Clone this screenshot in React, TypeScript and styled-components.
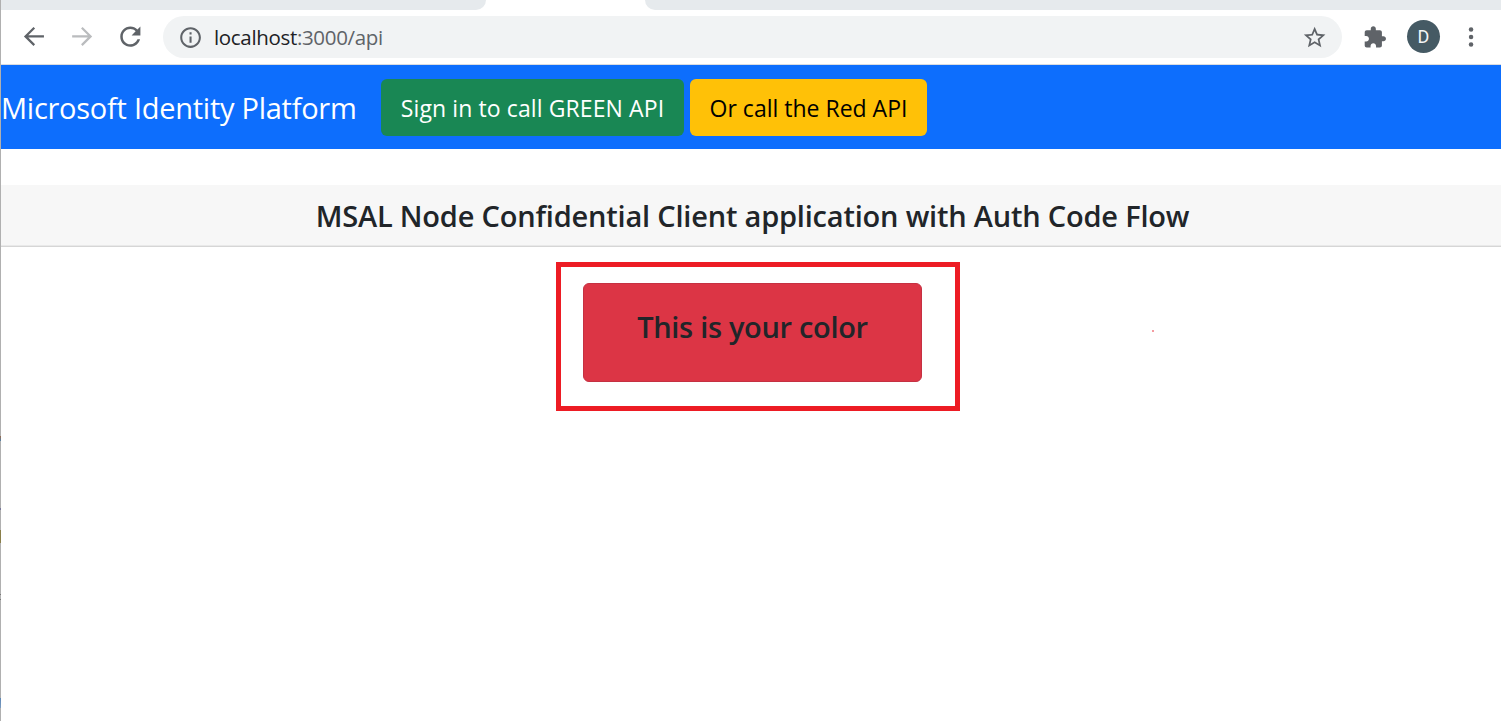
import React from "react";
import styled, { createGlobalStyle } from "styled-components";

const GlobalStyle = createGlobalStyle`
  * { box-sizing: border-box; }
  body {
    margin: 0;
    background: #fff;
    overflow: hidden;
    font-family: "Segoe UI", "Open Sans", "Noto Sans", sans-serif;
    color: #212529;
  }
`;

const Window = styled.div`
  position: relative;
  display: grid;
  grid-template-columns: 1px 1fr;
  width: 1501px;
  height: 721px;
  overflow: hidden;
`;

const WindowEdge = styled.div`
  background:
    linear-gradient(#8a7f4a, #8a7f4a) 0 530px / 1px 13px no-repeat,
    linear-gradient(#5d86b5, #7c9cc0) 0 698px / 1px 10px no-repeat,
    linear-gradient(#9a6a4a, #4f7fa8) 0 436px / 1px 5px no-repeat,
    linear-gradient(#777, #777) 0 594px / 1px 1px no-repeat,
    linear-gradient(#777, #777) 0 599px / 1px 1px no-repeat,
    linear-gradient(#77779a, #77779a) 0 508px / 1px 2px no-repeat,
    #b0b0b0;
`;

const Main = styled.div`
  display: flex;
  flex-direction: column;
  min-width: 0;
`;

const TabStrip = styled.div`
  display: flex;
  justify-content: space-between;
  height: 10px;
`;

const Tab = styled.div<{ $width: number; $side: "left" | "right" }>`
  width: ${(p) => p.$width}px;
  background: #e6eaed;
  border-radius: ${(p) => (p.$side === "left" ? "0 0 11px 0" : "0 0 0 11px")};
`;

const Toolbar = styled.div`
  display: flex;
  align-items: center;
  height: 55px;
  padding: 0 16px 0 20px;
  border-bottom: 1px solid #dadce0;
  color: #5f6368;
`;

const ToolIcon = styled.svg<{ $gap?: number; $faded?: boolean }>`
  flex: none;
  width: 27px;
  height: 27px;
  margin-right: ${(p) => p.$gap ?? 0}px;
  fill: currentColor;
  color: ${(p) => (p.$faded ? "#babcbe" : "#5f6368")};
`;

const AddressBar = styled.div`
  display: flex;
  flex: none;
  align-items: center;
  width: 1179px;
  height: 42px;
  padding: 0 14px 0 14px;
  border-radius: 21px;
  background: #f1f3f4;
  margin-right: 20px;
`;

const Url = styled.span`
  flex: 1;
  font-size: 20.5px;
  line-height: 28px;
  letter-spacing: -0.33px;
  color: #5f6368;
`;

const Host = styled.span`
  color: #202124;
`;

const Avatar = styled.div`
  display: flex;
  flex: none;
  align-items: center;
  justify-content: center;
  width: 33px;
  height: 33px;
  margin: -2px 18px 0 18px;
  border-radius: 50%;
  background: #455a64;
  color: #f3f5f6;
  font: 18px/33px Roboto, sans-serif;
`;

const Navbar = styled.nav`
  display: flex;
  align-items: center;
  height: 84px;
  background: #0d6efd;
`;

const Brand = styled.span`
  width: 380px;
  padding-top: 2px;
  font-size: 29px;
  line-height: 44px;
  letter-spacing: -0.26px;
  white-space: nowrap;
  color: #fff;
`;

const NavButton = styled.button<{ $tone: "green" | "yellow"; $width: number; $spacing: number }>`
  width: ${(p) => p.$width}px;
  height: 57px;
  margin: 1px 6px 0 0;
  padding: 0;
  border: 0;
  border-radius: 6px;
  background: ${(p) => (p.$tone === "green" ? "#198754" : "#ffc107")};
  color: ${(p) => (p.$tone === "green" ? "#fff" : "#000")};
  font: inherit;
  font-size: 23px;
  letter-spacing: ${(p) => p.$spacing}px;
  white-space: nowrap;
`;

const PageHeader = styled.header`
  height: 62px;
  margin-top: 36px;
  padding: 9px 0 0 3px;
  background: #f7f7f7;
  border-bottom: 1px solid #d6d6d6;
  box-shadow: inset 0 -1px #e9e9e9;
  text-align: center;
`;

const Title = styled.h5<{ $spacing: number }>`
  margin: 0;
  font-size: 29px;
  font-weight: 550;
  line-height: 44px;
  letter-spacing: ${(p) => p.$spacing}px;
  white-space: nowrap;
`;

const ColorCard = styled.section`
  align-self: center;
  width: 339px;
  height: 99px;
  margin: 36px 0 0 3px;
  padding-top: 21px;
  border: 1px solid #c53142;
  border-radius: 6px;
  background: #dc3545;
  text-align: center;
`;

const Highlight = styled.div`
  position: absolute;
  left: 556px;
  top: 262px;
  width: 404px;
  height: 149px;
  border: 5px solid #ed1c24;
`;

const Speck = styled.div`
  position: absolute;
  left: 1152px;
  top: 330px;
  width: 2px;
  height: 2px;
  background: #f49ba0;
`;

export default function App() {
  return (
    <Window>
      <GlobalStyle />
      <WindowEdge />
      <Main>
        <TabStrip>
          <Tab $width={485} $side="left" />
          <Tab $width={856} $side="right" />
        </TabStrip>
        <Toolbar>
          <ToolIcon viewBox="0 0 24 24" $gap={21}>
            <path d="M21 11H7.1l6-6L11.7 3.6 3.2 12l8.5 8.4 1.4-1.4-6-6H21z" transform="translate(-0.6 -0.9)" />
          </ToolIcon>
          <ToolIcon viewBox="0 0 24 24" $gap={21} $faded>
            <path d="M3 11h13.9l-6-6 1.4-1.4L20.8 12l-8.5 8.4-1.4-1.4 6-6H3z" transform="translate(-0.2 -0.9)" />
          </ToolIcon>
          <ToolIcon viewBox="0 0 24 24" $gap={19}>
            <path d="M17.65 6.35C16.2 4.9 14.21 4 12 4c-4.42 0-7.99 3.58-7.99 8s3.57 8 7.99 8c3.73 0 6.84-2.55 7.73-6h-2.08c-.82 2.33-3.04 4-5.65 4-3.31 0-6-2.69-6-6s2.69-6 6-6c1.66 0 3.14.69 4.22 1.78L13 11h7V4l-2.35 2.35z" transform="translate(-1.6 -2.2) scale(1.12)" />
          </ToolIcon>
          <AddressBar>
            <ToolIcon viewBox="0 0 24 24" $gap={10}>
              <path d="M11 17h2v-6h-2v6zm1-15C6.48 2 2 6.48 2 12s4.48 10 10 10 10-4.48 10-10S17.52 2 12 2zm0 18c-4.41 0-8-3.59-8-8s3.59-8 8-8 8 3.59 8 8-3.59 8-8 8zM11 9h2V7h-2v2z" transform="translate(1 1) scale(.92)" />
            </ToolIcon>
            <Url>
              <Host>localhost</Host>:3000/api
            </Url>
            <ToolIcon viewBox="0 0 24 24">
              <path d="M22 9.24l-7.19-.62L12 2 9.19 8.63 2 9.24l5.46 4.73L5.82 21 12 17.27 18.18 21l-1.63-7.03L22 9.24zM12 15.4l-3.76 2.27 1-4.28-3.32-2.88 4.38-.38L12 6.1l1.71 4.04 4.38.38-3.32 2.88 1 4.28L12 15.4z" transform="translate(.6 .5) scale(.96)" />
            </ToolIcon>
          </AddressBar>
          <ToolIcon viewBox="0 0 24 24">
            <path d="M20.5 11H19V7c0-1.1-.9-2-2-2h-4V3.5C13 2.12 11.88 1 10.5 1S8 2.12 8 3.5V5H4c-1.1 0-1.99.9-1.99 2v3.8H3.5c1.49 0 2.7 1.21 2.7 2.7s-1.21 2.7-2.7 2.7H2V20c0 1.1.9 2 2 2h3.8v-1.5c0-1.49 1.21-2.7 2.7-2.7 1.49 0 2.7 1.21 2.7 2.7V22H17c1.1 0 2-.9 2-2v-4h1.5c1.38 0 2.5-1.12 2.5-2.5S21.88 11 20.5 11z" transform="translate(.6 1) scale(.9)" />
          </ToolIcon>
          <Avatar>D</Avatar>
          <ToolIcon viewBox="0 0 24 24">
            <circle cx="11.6" cy="4.8" r="2" />
            <circle cx="11.6" cy="11.5" r="2" />
            <circle cx="11.6" cy="18.2" r="2" />
          </ToolIcon>
        </Toolbar>
        <Navbar>
          <Brand>Microsoft Identity Platform</Brand>
          <NavButton $tone="green" $width={303} $spacing={0.1}>
            Sign in to call GREEN API
          </NavButton>
          <NavButton $tone="yellow" $width={237} $spacing={0}>
            Or call the Red API
          </NavButton>
        </Navbar>
        <PageHeader>
          <Title $spacing={-0.2}>MSAL Node Confidential Client application with Auth Code Flow</Title>
        </PageHeader>
        <ColorCard>
          <Title $spacing={-0.32}>This is your color</Title>
        </ColorCard>
      </Main>
      <Highlight />
      <Speck />
    </Window>
  );
}
